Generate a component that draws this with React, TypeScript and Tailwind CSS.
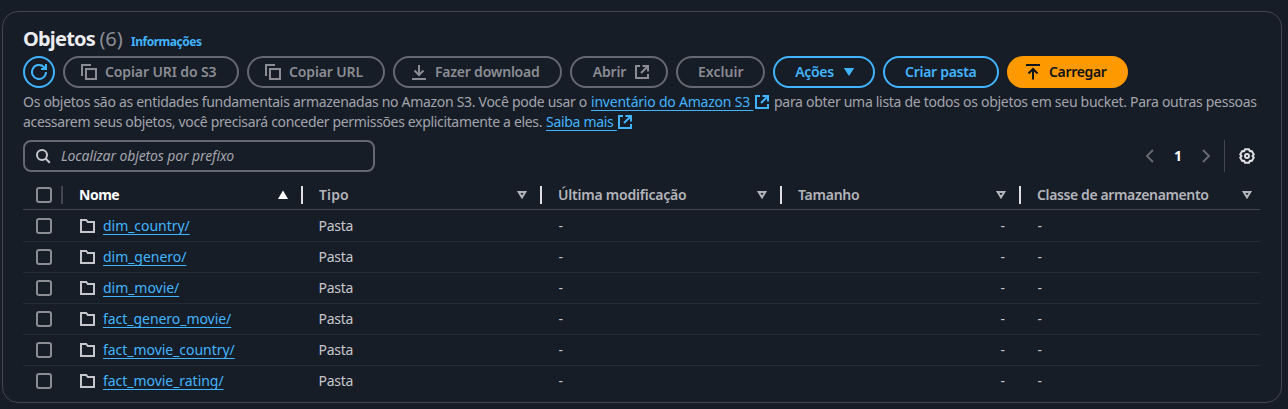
import type { ReactNode } from "react";

function Icon({ children, className = "", size = 16 }: { children: ReactNode; className?: string; size?: number }) {
  return (
    <svg
      width={size}
      height={size}
      viewBox={`0 0 ${size} ${size}`}
      fill="none"
      stroke="currentColor"
      strokeWidth={2}
      className={`shrink-0 ${className}`}
    >
      {children}
    </svg>
  );
}

const CopyIcon = () => (
  <Icon>
    <path d="M1 12V1h9" />
    <path d="M5 5h10v10H5z" />
  </Icon>
);

const DownloadIcon = () => (
  <Icon>
    <path d="M1 15h14M8 1v10M3.5 6.5 8 11l4.5-4.5" />
  </Icon>
);

const UploadIcon = () => (
  <Icon>
    <path d="M1 1h14M8 15.5V5.5M3.5 9.5 8 5l4.5 4.5" />
  </Icon>
);

const ExternalIcon = ({ className = "" }: { className?: string }) => (
  <Icon size={14} className={className}>
    <path d="M5 1H1v12h12V9" />
    <path d="M7.5 1H13v5.5M13 1 6 8" />
  </Icon>
);

const FolderIcon = () => (
  <Icon className="text-[#c6c6cd]">
    <path d="M1 14V2h5.2l1.6 2H14v10z" />
  </Icon>
);

const SortIcon = ({ active }: { active?: boolean }) =>
  active ? (
    <svg width="12" height="10" viewBox="0 0 12 10" className="shrink-0 fill-white">
      <path d="M6 .5 11 9H1z" />
    </svg>
  ) : (
    <svg width="12" height="10" viewBox="0 0 12 10" fill="none" stroke="currentColor" strokeWidth="2" className="shrink-0">
      <path d="M2.7 2h6.6L6 7.3z" />
    </svg>
  );

const Checkbox = () => <span className="block size-4 rounded-[3px] border-2 border-[#8c8c94]" />;

function Button({ tone, className = "", children }: { tone: "disabled" | "normal" | "primary"; className?: string; children: ReactNode }) {
  const tones = {
    disabled: "border-[#656871] text-[#8c8c94]",
    normal: "border-[#42b4ff] text-[#42b4ff]",
    primary: "border-[#ff9900] bg-[#ff9900] text-[#0f141a]",
  };
  return (
    <button className={`flex h-8 shrink-0 items-center gap-2 rounded-full border-2 pl-4 font-semibold whitespace-nowrap ${tones[tone]} ${className}`}>
      {children}
    </button>
  );
}

const linkClass = "text-[#42b4ff] underline decoration-1 underline-offset-[3px] [text-decoration-skip-ink:none]";
const gridClass = "grid grid-cols-[39px_240px_239px_240px_239px_240px]";

const columns = [
  { label: "Nome", tracking: "tracking-[-0.5px]", active: true },
  { label: "Tipo", tracking: "tracking-[0.1px]" },
  { label: "Última modificação", tracking: "tracking-[-0.22px]" },
  { label: "Tamanho", tracking: "tracking-[-0.25px]" },
  { label: "Classe de armazenamento", tracking: "tracking-[-0.38px]" },
];

const folders = ["dim_country/", "dim_genero/", "dim_movie/", "fact_genero_movie/", "fact_movie_country/", "fact_movie_rating/"];

export default function App() {
  return (
    <div className="h-[409px] w-[1288px] overflow-hidden bg-[#161d26] pt-[11px] pl-[2px] font-['Noto_Sans',sans-serif] text-sm leading-5 text-[#c6c6cd]">
      <main className="flex h-[392px] w-[1280px] flex-col rounded-2xl border border-[#424650] bg-[#161d26] pl-5">
        <div className="mt-[15px] flex h-[24px] items-baseline whitespace-nowrap">
          <h1 className="w-[76.5px] text-xl leading-6 font-bold tracking-[-0.8px] text-[#ebebf0]">Objetos</h1>
          <span className="w-[31.5px] text-xl leading-6 tracking-[-0.15px] text-[#8c8c94]">(6)</span>
          <a className="text-xs font-bold tracking-[-0.48px] text-[#42b4ff]">Informações</a>
        </div>

        <div className="mt-[5px] flex h-8 gap-2">
          <button className="flex size-8 shrink-0 items-center justify-center rounded-full border-2 border-[#42b4ff] text-[#42b4ff]">
            <Icon>
              <path d="M15 8a7 7 0 1 1-2.3-5.2L14.5 5" />
              <path d="M15 0v5h-5" />
            </Icon>
          </button>
          <Button tone="disabled" className="w-[176px]">
            <CopyIcon />
            <span className="tracking-[-0.11px]">Copiar URI do S3</span>
          </Button>
          <Button tone="disabled" className="w-[138px]">
            <CopyIcon />
            <span className="tracking-[-0.13px]">Copiar URL</span>
          </Button>
          <Button tone="disabled" className="w-[169px]">
            <DownloadIcon />
            <span className="tracking-[-0.22px]">Fazer download</span>
          </Button>
          <Button tone="disabled" className="w-[98px] pl-5">
            <span className="w-[35px] tracking-[-0.16px]">Abrir</span>
            <ExternalIcon />
          </Button>
          <Button tone="disabled" className="w-[89px] pl-5">
            <span className="tracking-[0.02px]">Excluir</span>
          </Button>
          <Button tone="normal" className="w-[102px] pl-[19px]">
            <span className="w-[41px] tracking-[-0.33px]">Ações</span>
            <svg width="12" height="10" viewBox="0 0 12 10" className="fill-current">
              <path d="M.8 1h10.4L6 9z" />
            </svg>
          </Button>
          <Button tone="normal" className="w-[116px] pl-5">
            <span className="tracking-[-0.28px]">Criar pasta</span>
          </Button>
          <Button tone="primary" className="w-[121px]">
            <UploadIcon />
            <span className="tracking-[-0.34px]">Carregar</span>
          </Button>
        </div>

        <div className="mt-[4px] whitespace-nowrap text-[#a4a4ad]">
          <p className="flex h-5 items-center">
            <span className="w-[568px] tracking-[-0.3px]">Os objetos são as entidades fundamentais armazenadas no Amazon S3. Você pode usar o</span>
            <a className={`w-[164px] tracking-[-0.22px] whitespace-pre ${linkClass}`}>{"inventário do Amazon S3 "}</a>
            <ExternalIcon className="mr-[5px] text-[#42b4ff]" />
            <span className="tracking-[-0.29px]">para obter uma lista de todos os objetos em seu bucket. Para outras pessoas</span>
          </p>
          <p className="flex h-5 items-center">
            <span className="w-[523px] tracking-[-0.34px]">acessarem seus objetos, você precisará conceder permissões explicitamente a eles.</span>
            <a className={`w-[72px] tracking-[-0.3px] whitespace-pre ${linkClass}`}>{"Saiba mais "}</a>
            <ExternalIcon className="text-[#42b4ff]" />
          </p>
        </div>

        <div className="mt-2 flex h-8 items-center">
          <div className="flex h-8 w-[352px] items-center gap-[9px] rounded-lg border-2 border-[#656871] pl-[11px]">
            <Icon className="text-[#c6c6cd]">
              <circle cx="6" cy="7" r="5" />
              <path d="m9.5 10.5 4.3 4.3" />
            </Icon>
            <span className="tracking-[-0.11px] text-[#a4a4ad] italic">Localizar objetos por prefixo</span>
          </div>
          <div className="ml-auto flex h-8 items-center pr-[26px]">
            <Icon className="text-[#656871]">
              <path d="M11 2 5 8l6 6" />
            </Icon>
            <span className="w-10 text-center font-bold text-white">1</span>
            <Icon className="text-[#656871]">
              <path d="m5 2 6 6-6 6" />
            </Icon>
            <span className="mr-[14px] ml-[10px] h-8 w-px bg-[#424650]" />
            <Icon className="text-[#dedee3]">
              <path
                strokeLinejoin="round"
                d="M10 1.2 10.8 3.3 12.8 3 14.8 6.4 13.5 8 14.8 9.6 12.8 13 10.8 12.7 10 14.8H6L5.2 12.7 3.2 13 1.2 9.6 2.5 8 1.2 6.4 3.2 3 5.2 3.3 6 1.2z"
              />
              <circle cx="8" cy="8" r="2" />
            </Icon>
          </div>
        </div>

        <div role="table" className="mt-2 w-[1237px]">
          <div role="row" className={`${gridClass} h-[30px] border-b border-[#424650] font-semibold text-[#b4b4bb]`}>
            <div className="flex h-[30px] items-center pl-[13px]">
              <Checkbox />
            </div>
            {columns.map((column, index) => (
              <div key={column.label} className="flex h-[30px] items-center">
                <span className={index === 0 ? "h-[18px] w-0.5 -translate-x-px bg-[#424650]" : "h-[18px] w-0.5 -translate-x-px bg-[#dedee3]"} />
                <span className={`ml-[15px] flex-1 whitespace-nowrap ${column.tracking} ${column.active ? "font-bold text-white" : ""}`}>{column.label}</span>
                <span className={index === 4 ? "mr-[7px]" : "mr-[13px]"}>
                  <SortIcon active={column.active} />
                </span>
              </div>
            ))}
          </div>
          {folders.map((name, index) => (
            <div
              role="row"
              key={name}
              className={`${gridClass} items-center border-[#232b37] ${index === 0 ? "h-8" : index === folders.length - 1 ? "h-[30px]" : "h-[31px]"} ${index < folders.length - 1 ? "border-b" : ""}`}
            >
              <div className="pl-[13px]">
                <Checkbox />
              </div>
              <div className="flex items-center gap-[7px] pl-[18px]">
                <FolderIcon />
                <a className={`tracking-[-0.04px] ${linkClass}`}>{name}</a>
              </div>
              <div className="pl-[16.5px] tracking-[-0.29px]">Pasta</div>
              <div className="pl-[17.5px]">-</div>
              <div className="pr-[15px] text-right">-</div>
              <div className="pl-[17.5px]">-</div>
            </div>
          ))}
        </div>
      </main>
    </div>
  );
}
